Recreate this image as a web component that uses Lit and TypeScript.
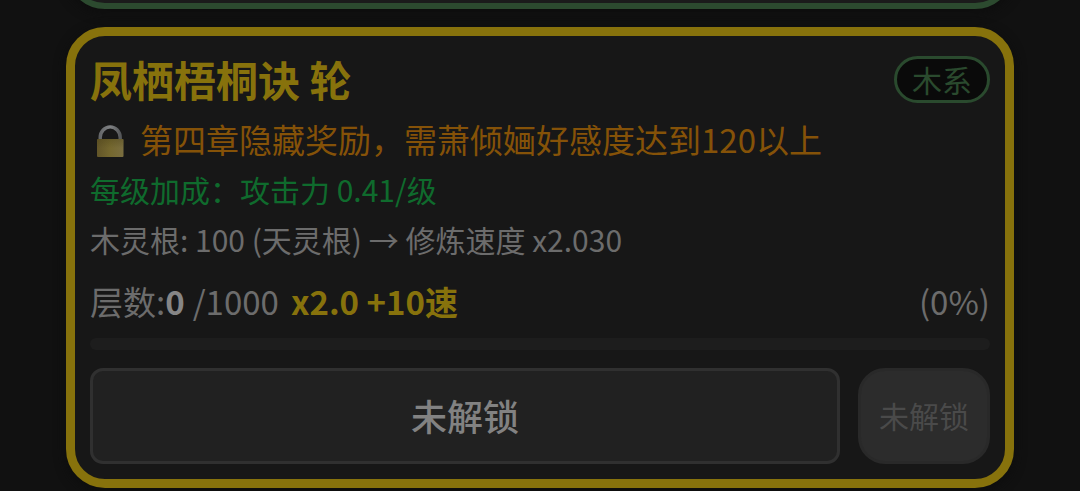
import { LitElement, html, css, svg } from "lit";
import { customElement, property } from "lit/decorators.js";

@customElement("lock-icon")
class LockIcon extends LitElement {
  static styles = css`
    :host {
      display: block;
    }
    .lock {
      display: block;
      width: 28px;
      height: 38px;
    }
  `;

  render() {
    return html`<svg class="lock" viewBox="0 -4 28 38" aria-hidden="true">
      ${svg`
        <defs>
          <linearGradient id="body" x1="0" x2="1" y1="0" y2="0">
            <stop offset="0" stop-color="#625528" />
            <stop offset="0.5" stop-color="#75682f" />
            <stop offset="1" stop-color="#7a6e40" />
          </linearGradient>
          <linearGradient id="shade" x1="0" x2="0" y1="0" y2="1">
            <stop offset="0" stop-color="#4c4318" stop-opacity="0.4" />
            <stop offset="0.5" stop-color="#4c4318" stop-opacity="0" />
          </linearGradient>
          <linearGradient id="bow" x1="0" x2="1" y1="0" y2="0">
            <stop offset="0" stop-color="#66686a" />
            <stop offset="0.5" stop-color="#808284" />
            <stop offset="1" stop-color="#56585a" />
          </linearGradient>
        </defs>
        <path d="M4.2 16V13.5a10 10.6 0 0 1 20 0V16" fill="none" stroke="url(#bow)" stroke-width="3.4" />
        <rect x="1" y="15" width="26.5" height="18" rx="1" fill="url(#body)" />
        <rect x="1" y="15" width="26.5" height="18" rx="1" fill="url(#shade)" />
      `}
    </svg>`;
  }
}

@customElement("skill-card")
class SkillCard extends LitElement {
  @property() name = "";
  @property() element = "";
  @property() condition = "";
  @property() bonus = "";
  @property() root = "";
  @property({ type: Number }) level = 0;
  @property({ type: Number }) maxLevel = 1000;
  @property() speed = "";

  static styles = css`
    :host {
      display: block;
      box-sizing: border-box;
      padding: 15px;
      border: 9px solid #87720c;
      border-radius: 39px;
      background: #171717;
      color: #6c6c6c;
      box-shadow: 0 3px 12px #0d0d0d;
    }
    .head,
    .condition,
    .progress,
    .actions {
      display: flex;
      align-items: center;
    }
    .head {
      justify-content: space-between;
      min-height: 56px;
      margin-bottom: 7px;
    }
    .name {
      margin: 0;
      font-size: 42px;
      line-height: 56px;
      font-weight: 700;
      color: #87720c;
    }
    .badge {
      box-sizing: border-box;
      padding: 0 15px;
      border: 3px solid #2a4a2e;
      border-radius: 24px;
      background: #0a0a0a;
      color: #2a4a2e;
      font-size: 30px;
      line-height: 41px;
    }
    .line {
      margin: 0;
      font-size: 30px;
      line-height: 50px;
    }
    .condition {
      gap: 16px;
      padding-left: 6px;
      font-size: 33px;
      color: #855208;
    }
    .bonus {
      color: #0f6b2d;
    }
    .progress {
      margin-top: 12px;
      font-size: 33px;
      line-height: 50px;
    }
    .level {
      color: #868686;
      margin-right: 8px;
    }
    .speed {
      margin-left: 12px;
      color: #87720c;
    }
    .percent {
      margin-left: auto;
    }
    .bar {
      height: 12px;
      margin: 12px 0 18px;
      border-radius: 6px;
      background: #1d1d1d;
      overflow: hidden;
    }
    .fill {
      height: 100%;
      background: #87720c;
    }
    .actions {
      gap: 18px;
    }
    button {
      box-sizing: border-box;
      height: 96px;
      margin: 0;
      padding: 0 18px 2px;
      border: 3px solid #303030;
      font-family: inherit;
    }
    .train {
      flex: 1;
      border-radius: 13px;
      background: #212121;
      color: #828282;
      font-size: 36px;
      font-weight: 500;
    }
    .quick {
      border-color: #292929;
      border-radius: 27px;
      background: #2c2c2c;
      color: #4a4a4a;
      font-size: 30px;
    }
  `;

  render() {
    const percent = Math.round((this.level / this.maxLevel) * 100);
    return html`
      <header class="head">
        <h2 class="name">${this.name}</h2>
        <span class="badge">${this.element}</span>
      </header>
      <p class="line condition"><lock-icon></lock-icon><span>${this.condition}</span></p>
      <p class="line bonus">${this.bonus}</p>
      <p class="line">${this.root}</p>
      <div class="progress">
        <span>层数:</span><b class="level">${this.level}</b><span>/${this.maxLevel}</span>
        <b class="speed">${this.speed}</b>
        <span class="percent">(${percent}%)</span>
      </div>
      <div class="bar"><div class="fill" style="width:${percent}%"></div></div>
      <div class="actions">
        <button class="train" disabled>未解锁</button>
        <button class="quick" disabled>未解锁</button>
      </div>
    `;
  }
}

@customElement("app-root")
class AppRoot extends LitElement {
  static styles = css`
    :host {
      display: flex;
      flex-direction: column;
      justify-content: flex-end;
      gap: 18px;
      box-sizing: border-box;
      height: 100vh;
      padding: 0 66px 3px;
      overflow: hidden;
      background: #111111;
      font-family: "Noto Sans CJK SC", sans-serif;
    }
    .previous {
      flex: none;
      box-sizing: border-box;
      min-height: 120px;
      border: 6px solid #2c4a2f;
      border-radius: 39px;
      background: #1b1b1b;
      box-shadow: 0 3px 12px #0d0d0d;
    }
    skill-card {
      flex: none;
    }
  `;

  render() {
    return html`
      <section class="previous"></section>
      <skill-card
        name="凤栖梧桐诀 轮"
        element="木系"
        condition="第四章隐藏奖励，需萧倾婳好感度达到120以上"
        bonus="每级加成：攻击力 0.41/级"
        root="木灵根: 100 (天灵根) → 修炼速度 x2.030"
        .level=${0}
        .maxLevel=${1000}
        speed="x2.0 +10速"
      ></skill-card>
    `;
  }
}
